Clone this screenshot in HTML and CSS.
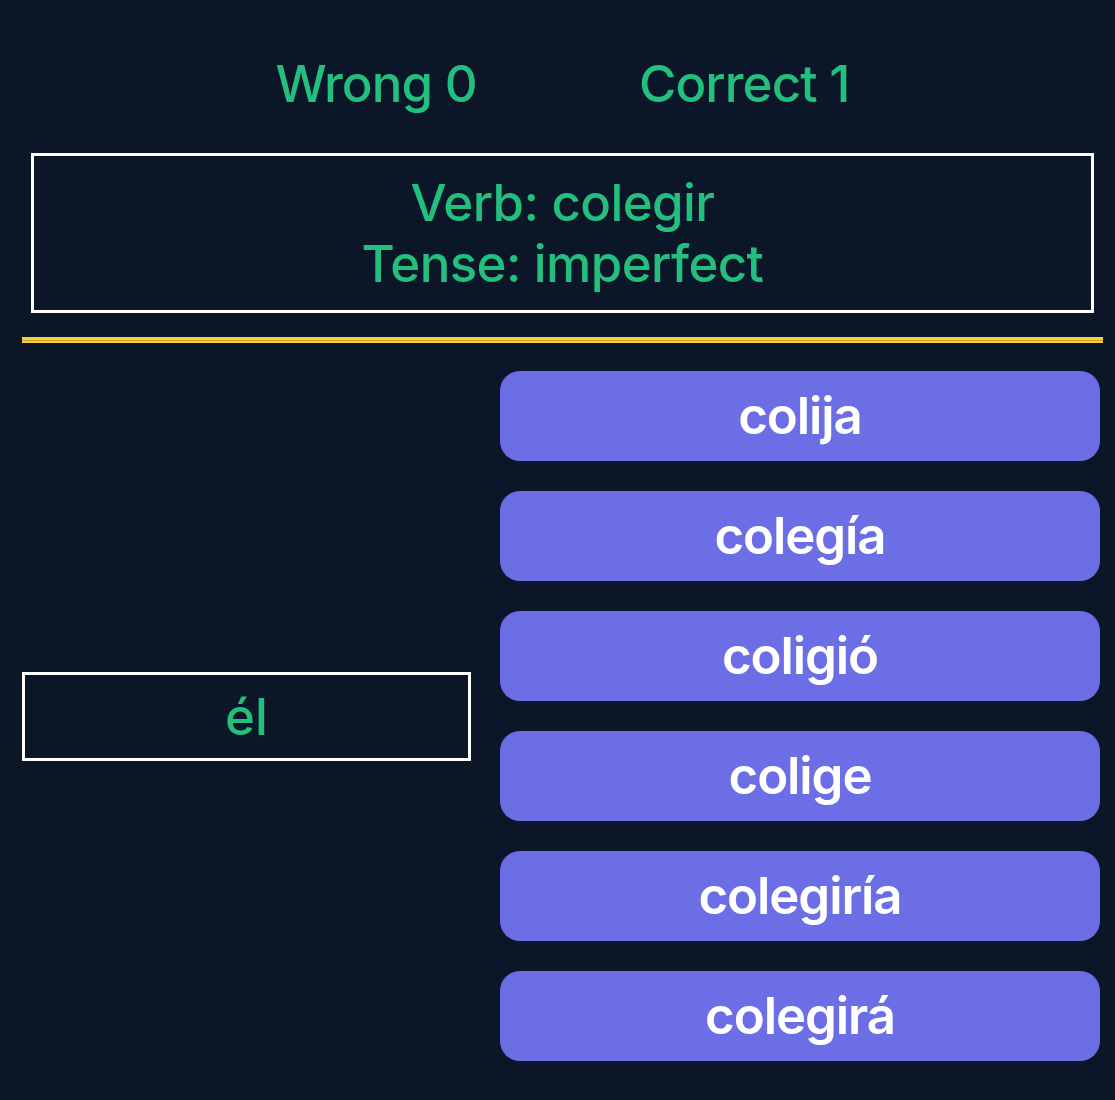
FILE: index.html
```html
<!DOCTYPE html>
<html lang="es">
<head>
<meta charset="utf-8">
<title>Conjugation quiz</title>
<link rel="stylesheet" href="styles.css">
</head>
<body>
<div class="page">
  <header class="score">
    <span class="score-item">Wrong 0</span>
    <span class="score-item">Correct 1</span>
  </header>
  <section class="prompt">
    <div class="prompt-line">Verb: colegir</div>
    <div class="prompt-line">Tense: imperfect</div>
  </section>
  <div class="divider"></div>
  <main class="quiz">
    <div class="subject-col">
      <div class="subject">él</div>
    </div>
    <div class="options">
      <button class="option">colija</button>
      <button class="option">colegía</button>
      <button class="option">coligió</button>
      <button class="option">colige</button>
      <button class="option">colegiría</button>
      <button class="option">colegirá</button>
    </div>
  </main>
</div>
</body>
</html>
```

FILE: styles.css
```css
html, body {
  margin: 0;
  padding: 0;
  background: #0b1629;
}

body {
  font-family: Inter, "Noto Sans", "Liberation Sans", sans-serif;
  color: #22bf7e;
  min-height: 1100px;
}

.page {
  padding: 53px 12px 0 22px;
}

.score {
  display: flex;
  justify-content: center;
  gap: 162px;
  font-size: 51px;
  font-weight: 500;
  line-height: 61px;
  letter-spacing: -0.9px;
}

.prompt {
  margin: 39px 9px 0 9px;
  border: 3px solid #ffffff;
  padding: 16px 0;
  text-align: center;
  font-size: 51px;
  font-weight: 500;
  line-height: 61px;
  letter-spacing: -0.6px;
}

.divider {
  margin-top: 24px;
  height: 6px;
  background: linear-gradient(to bottom, #f6cf3c 0, #f6cf3c 2.5px, #c9a22e 2.5px, #c9a22e 3.5px, #f6cf3c 3.5px, #f6cf3c 6px);
}

.quiz {
  margin-top: 28px;
  display: grid;
  grid-template-columns: 449px 600px;
  column-gap: 29px;
}

.subject-col {
  display: flex;
  align-items: center;
}

.subject {
  width: 100%;
  box-sizing: border-box;
  border: 3px solid #ffffff;
  height: 89px;
  line-height: 83px;
  text-align: center;
  font-size: 51px;
  font-weight: 500;
}

.options {
  display: flex;
  flex-direction: column;
  gap: 30px;
}

.option {
  display: block;
  width: 100%;
  height: 90px;
  border: none;
  border-radius: 20px;
  background: #6b6ee4;
  color: #ffffff;
  font-family: Inter, "Noto Sans", "Liberation Sans", sans-serif;
  font-size: 51px;
  font-weight: 600;
  letter-spacing: -1.1px;
  padding: 0;
  line-height: 90px;
  text-align: center;
}
```
